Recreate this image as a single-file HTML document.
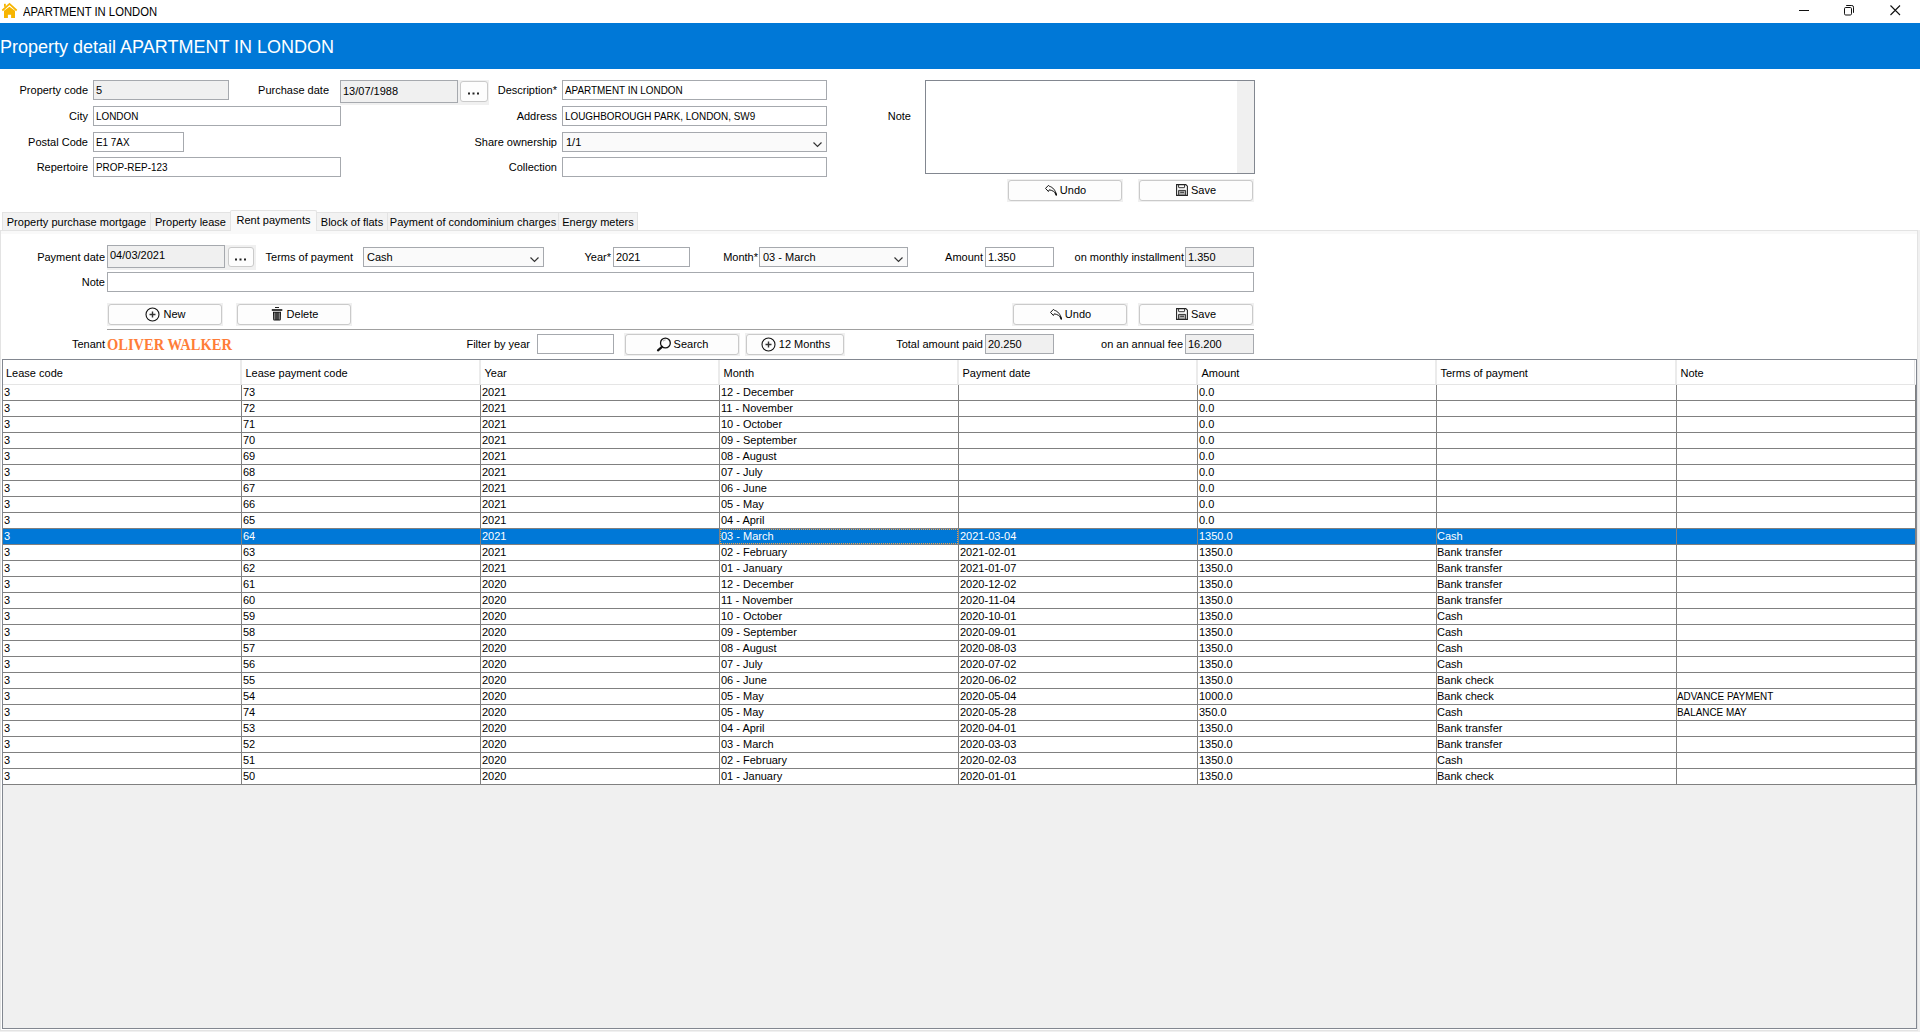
<!DOCTYPE html><html><head><meta charset="utf-8"><title>APARTMENT IN LONDON</title><style>
*{margin:0;padding:0;box-sizing:border-box}
html,body{width:1920px;height:1032px;overflow:hidden;background:#fff;font-family:"Liberation Sans", sans-serif;font-size:11px;color:#000;position:relative}
.lbl{position:absolute;white-space:nowrap}
.fld{position:absolute;border:1px solid #a6a9ae;background:#fff;padding-left:2px;white-space:nowrap;overflow:hidden}
.dis{background:#f0f0f0}
.cmb{background:#fafafa;padding-left:3px}
.chev{position:absolute}
.pnl{position:absolute;background:#f0f0f0}
.btn{position:absolute;border:1px solid #cacaca;border-radius:3px;background:#fdfdfd;text-align:center;white-space:nowrap}
.ico{display:inline-block;vertical-align:middle;position:relative;top:-1px}
.up{display:inline-block;transform:scaleX(0.9);transform-origin:0 50%}
</style></head><body>
<svg style="position:absolute;left:0;top:0" width="20" height="20" viewBox="0 0 20 20"><path d="M2.3 10.5 L9.5 3.9 L16.7 10.5" fill="none" stroke="#f7b500" stroke-width="1.7"/><rect x="4" y="3.8" width="1.8" height="3" fill="#f7b500"/><path d="M4 10.8 L9.5 6.7 L15 10.8 V18 H11.1 V14.7 H7.9 V18 H4 Z" fill="#f7b500"/></svg>
<div class="lbl" style="left:23px;top:4px;font-size:12px;line-height:16px;transform:scaleX(0.94);transform-origin:0 50%">APARTMENT IN LONDON</div>
<div style="position:absolute;left:1799px;top:10px;width:10px;height:1px;background:#111"></div>
<svg style="position:absolute;left:1844px;top:5px" width="11" height="11" viewBox="0 0 11 11"><rect x="0.5" y="2.5" width="7" height="7.5" rx="1.2" fill="none" stroke="#111"/><path d="M2.2 0.5 H7.8 Q9.5 0.5 9.5 2.2 V7.8" fill="none" stroke="#111"/></svg>
<svg style="position:absolute;left:1890px;top:5px" width="11" height="11" viewBox="0 0 11 11"><path d="M0.5 0.5 L10 10 M10 0.5 L0.5 10" stroke="#111" stroke-width="1.1"/></svg>
<div style="position:absolute;left:0;top:23px;width:1920px;height:46px;background:#0078d7"></div>
<div class="lbl" style="left:0px;top:36px;font-size:18px;line-height:22px;color:#fff">Property detail APARTMENT IN LONDON</div>
<div class="lbl" style="right:1832px;top:80px;height:20px;line-height:20px;">Property code</div>
<div class="fld dis" style="left:93px;top:80px;width:136px;height:20px;line-height:18px;">5</div>
<div class="lbl" style="right:1832px;top:106px;height:20px;line-height:20px;">City</div>
<div class="fld" style="left:93px;top:106px;width:248px;height:20px;line-height:18px;"><span class="up">LONDON</span></div>
<div class="lbl" style="right:1832px;top:132px;height:20px;line-height:20px;">Postal Code</div>
<div class="fld" style="left:93px;top:132px;width:91px;height:20px;line-height:18px;"><span class="up">E1 7AX</span></div>
<div class="lbl" style="right:1832px;top:157px;height:20px;line-height:20px;">Repertoire</div>
<div class="fld" style="left:93px;top:157px;width:248px;height:20px;line-height:18px;"><span class="up">PROP-REP-123</span></div>
<div class="lbl" style="right:1591px;top:80px;height:20px;line-height:20px;">Purchase date</div>
<div class="pnl" style="left:340px;top:80px;width:149px;height:25px"></div>
<div class="fld dis" style="left:340px;top:80px;width:118px;height:23px;line-height:21px;line-height:21px">13/07/1988</div>
<div class="btn" style="left:460px;top:81px;width:28px;height:21px;line-height:19px;"><svg width="11" height="3" viewBox="0 0 11 3" style="display:inline-block;vertical-align:middle;position:relative;top:1px;left:-1px"><rect x="0" y="0.5" width="2" height="2" fill="#222"/><rect x="4.5" y="0.5" width="2" height="2" fill="#222"/><rect x="9" y="0.5" width="2" height="2" fill="#222"/></svg></div>
<div class="lbl" style="right:1363px;top:80px;height:20px;line-height:20px;">Description*</div>
<div class="fld" style="left:562px;top:80px;width:265px;height:20px;line-height:18px;"><span class="up">APARTMENT IN LONDON</span></div>
<div class="lbl" style="right:1363px;top:106px;height:20px;line-height:20px;">Address</div>
<div class="fld" style="left:562px;top:106px;width:265px;height:20px;line-height:18px;"><span class="up">LOUGHBOROUGH PARK, LONDON, SW9</span></div>
<div class="lbl" style="right:1363px;top:132px;height:20px;line-height:20px;">Share ownership</div>
<div class="fld cmb" style="left:562px;top:132px;width:265px;height:20px;line-height:18px;">1/1<svg class="chev" style="left:250px;top:9px" width="9" height="6" viewBox="0 0 9 6"><path d="M0.5 0.5 L4.5 4.5 L8.5 0.5" fill="none" stroke="#333" stroke-width="1.15"/></svg></div>
<div class="lbl" style="right:1363px;top:157px;height:20px;line-height:20px;">Collection</div>
<div class="fld" style="left:562px;top:157px;width:265px;height:20px;line-height:18px;"></div>
<div class="lbl" style="right:1009px;top:106px;height:20px;line-height:20px;">Note</div>
<div style="position:absolute;left:925px;top:80px;width:330px;height:94px;border:1px solid #828790;background:#fff"><div style="position:absolute;right:0;top:0;width:17px;height:92px;background:#f0f0f0"></div></div>
<div class="pnl" style="left:1007px;top:179px;width:116px;height:23px"></div>
<div class="btn" style="left:1008px;top:180px;width:114px;height:21px;line-height:19px;"><svg class="ico" width="12" height="11" viewBox="0 0 12 11" style="margin-right:4px;left:1px"><path d="M0.5 3.4 L3.4 0.4 L4.5 1.3 C7.6 2.2 10.5 5 11.5 10.2 C10.5 7 7.6 5.4 4.3 4.8 L3.4 6.5 Z" fill="none" stroke="#111" stroke-width="1" stroke-linejoin="round"/><path d="M10.2 7.6 L11.5 10.4" stroke="#111" stroke-width="1.4"/></svg>Undo</div>
<div class="pnl" style="left:1138px;top:179px;width:116px;height:23px"></div>
<div class="btn" style="left:1139px;top:180px;width:114px;height:21px;line-height:19px;"><svg class="ico" width="12" height="12" viewBox="0 0 12 12" style="margin-right:3px"><rect x="2.6" y="6.4" width="7" height="5" fill="#b0b0b0"/><path d="M0.6 0.6 H9.8 L11.4 2.2 V11.4 H0.6 Z" fill="none" stroke="#222" stroke-width="1.1"/><path d="M2.6 0.6 V3.3 Q2.6 3.7 3 3.7 H8.2 Q8.6 3.7 8.6 3.3 V0.6" fill="none" stroke="#333" stroke-width="1"/><path d="M2.6 6.4 V11.4 M9.6 6.4 V11.4 M4.2 8.3 H8 M2.6 6.4 H9.6" fill="none" stroke="#333" stroke-width="1"/></svg>Save</div>
<div style="position:absolute;left:1918px;top:230px;width:2px;height:802px;background:#f0f0f0"></div>
<div style="position:absolute;left:0px;top:1031px;width:1920px;height:1px;background:#f0f0f0"></div>
<div style="position:absolute;left:0px;top:230px;width:1918px;height:801px;border:1px solid #e3e3e3;background:#fff"></div>
<div style="position:absolute;left:1px;top:231px;width:1916px;height:3px;background:#f9f9f9"></div>
<div class="lbl" style="left:2px;top:212px;width:149px;height:18px;border:1px solid #e3e3e3;border-bottom:none;background:#f2f2f2;text-align:center;line-height:19px">Property purchase mortgage</div>
<div class="lbl" style="left:150px;top:212px;width:81px;height:18px;border:1px solid #e3e3e3;border-bottom:none;background:#f2f2f2;text-align:center;line-height:19px">Property lease</div>
<div class="lbl" style="left:230px;top:210px;width:87px;height:20px;border:1px solid #e3e3e3;border-bottom:none;border-radius:2px 2px 0 0;background:#f9f9f9;text-align:center;line-height:19px">Rent payments</div>
<div style="position:absolute;left:231px;top:230px;width:85px;height:1px;background:#f9f9f9"></div>
<div class="lbl" style="left:316px;top:212px;width:72px;height:18px;border:1px solid #e3e3e3;border-bottom:none;background:#f2f2f2;text-align:center;line-height:19px">Block of flats</div>
<div class="lbl" style="left:387px;top:212px;width:172px;height:18px;border:1px solid #e3e3e3;border-bottom:none;background:#f2f2f2;text-align:center;line-height:19px">Payment of condominium charges</div>
<div class="lbl" style="left:558px;top:212px;width:80px;height:18px;border:1px solid #e3e3e3;border-bottom:none;background:#f2f2f2;text-align:center;line-height:19px">Energy meters</div>
<div class="lbl" style="right:1815px;top:247px;height:20px;line-height:20px;">Payment date</div>
<div class="pnl" style="left:107px;top:245px;width:149px;height:25px"></div>
<div class="fld dis" style="left:107px;top:245px;width:118px;height:23px;line-height:21px;line-height:19px">04/03/2021</div>
<div class="btn" style="left:228px;top:247px;width:26px;height:20px;line-height:18px;"><svg width="11" height="3" viewBox="0 0 11 3" style="display:inline-block;vertical-align:middle;position:relative;top:1px;left:-1px"><rect x="0" y="0.5" width="2" height="2" fill="#222"/><rect x="4.5" y="0.5" width="2" height="2" fill="#222"/><rect x="9" y="0.5" width="2" height="2" fill="#222"/></svg></div>
<div class="lbl" style="right:1567px;top:247px;height:20px;line-height:20px;">Terms of payment</div>
<div class="fld cmb" style="left:363px;top:247px;width:181px;height:20px;line-height:18px;">Cash<svg class="chev" style="left:166px;top:9px" width="9" height="6" viewBox="0 0 9 6"><path d="M0.5 0.5 L4.5 4.5 L8.5 0.5" fill="none" stroke="#333" stroke-width="1.15"/></svg></div>
<div class="lbl" style="right:1309px;top:247px;height:20px;line-height:20px;">Year*</div>
<div class="fld" style="left:613px;top:247px;width:77px;height:20px;line-height:18px;">2021</div>
<div class="lbl" style="right:1162px;top:247px;height:20px;line-height:20px;">Month*</div>
<div class="fld cmb" style="left:759px;top:247px;width:149px;height:20px;line-height:18px;">03 - March<svg class="chev" style="left:134px;top:9px" width="9" height="6" viewBox="0 0 9 6"><path d="M0.5 0.5 L4.5 4.5 L8.5 0.5" fill="none" stroke="#333" stroke-width="1.15"/></svg></div>
<div class="lbl" style="right:937px;top:247px;height:20px;line-height:20px;">Amount</div>
<div class="fld" style="left:985px;top:247px;width:69px;height:20px;line-height:18px;">1.350</div>
<div class="lbl" style="right:736px;top:247px;height:20px;line-height:20px;">on monthly installment</div>
<div class="fld dis" style="left:1185px;top:247px;width:69px;height:20px;line-height:18px;">1.350</div>
<div class="lbl" style="right:1815px;top:272px;height:20px;line-height:20px;">Note</div>
<div class="fld" style="left:107px;top:272px;width:1147px;height:20px;line-height:18px;"></div>
<div class="pnl" style="left:107px;top:303px;width:116px;height:23px"></div>
<div class="btn" style="left:108px;top:304px;width:114px;height:21px;line-height:19px;"><svg class="ico" width="15" height="15" viewBox="0 0 15 15" style="margin-right:4px;left:1px"><circle cx="7.5" cy="7.5" r="6.5" fill="none" stroke="#111" stroke-width="1.1"/><path d="M4.5 7.5 H10.5 M7.5 4.5 V10.5" stroke="#333" stroke-width="1.4"/></svg>New</div>
<div class="pnl" style="left:236px;top:303px;width:116px;height:23px"></div>
<div class="btn" style="left:237px;top:304px;width:114px;height:21px;line-height:19px;"><svg class="ico" width="12" height="14" viewBox="0 0 12 14" style="margin-right:5px;left:1px"><rect x="4" y="0" width="4" height="1" fill="#222"/><rect x="0.8" y="2.2" width="10.5" height="1.6" fill="#111"/><path d="M2 4.8 H10 L9.8 12.6 Q9.7 13.6 8.7 13.6 H3.3 Q2.3 13.6 2.2 12.6 Z" fill="#111"/><rect x="3.4" y="5.6" width="0.9" height="7" fill="#ccc"/><rect x="7.7" y="5.6" width="0.9" height="7" fill="#ccc"/><rect x="5.5" y="5.6" width="1" height="7" fill="#777"/></svg>Delete</div>
<div class="pnl" style="left:1012px;top:303px;width:116px;height:23px"></div>
<div class="btn" style="left:1013px;top:304px;width:114px;height:21px;line-height:19px;"><svg class="ico" width="12" height="11" viewBox="0 0 12 11" style="margin-right:4px;left:1px"><path d="M0.5 3.4 L3.4 0.4 L4.5 1.3 C7.6 2.2 10.5 5 11.5 10.2 C10.5 7 7.6 5.4 4.3 4.8 L3.4 6.5 Z" fill="none" stroke="#111" stroke-width="1" stroke-linejoin="round"/><path d="M10.2 7.6 L11.5 10.4" stroke="#111" stroke-width="1.4"/></svg>Undo</div>
<div class="pnl" style="left:1138px;top:303px;width:116px;height:23px"></div>
<div class="btn" style="left:1139px;top:304px;width:114px;height:21px;line-height:19px;"><svg class="ico" width="12" height="12" viewBox="0 0 12 12" style="margin-right:3px"><rect x="2.6" y="6.4" width="7" height="5" fill="#b0b0b0"/><path d="M0.6 0.6 H9.8 L11.4 2.2 V11.4 H0.6 Z" fill="none" stroke="#222" stroke-width="1.1"/><path d="M2.6 0.6 V3.3 Q2.6 3.7 3 3.7 H8.2 Q8.6 3.7 8.6 3.3 V0.6" fill="none" stroke="#333" stroke-width="1"/><path d="M2.6 6.4 V11.4 M9.6 6.4 V11.4 M4.2 8.3 H8 M2.6 6.4 H9.6" fill="none" stroke="#333" stroke-width="1"/></svg>Save</div>
<div style="position:absolute;left:107px;top:329px;width:1147px;height:1px;background:#a0a0a0"></div>
<div class="lbl" style="right:1815px;top:334px;height:20px;line-height:20px;">Tenant</div>
<div class="lbl" style="left:107px;top:334px;height:22px;line-height:22px;font-family:Liberation Serif,serif;font-size:16px;font-weight:bold;color:#ff7d38"><span style="display:inline-block;transform:scaleX(0.905);transform-origin:0 50%">OLIVER WALKER</span></div>
<div class="lbl" style="right:1390px;top:334px;height:20px;line-height:20px;">Filter by year</div>
<div class="fld" style="left:537px;top:334px;width:77px;height:20px;line-height:18px;"></div>
<div class="pnl" style="left:624px;top:333px;width:116px;height:23px"></div>
<div class="btn" style="left:625px;top:334px;width:114px;height:21px;line-height:19px;"><svg class="ico" width="15" height="15" viewBox="0 0 15 15" style="margin-right:3px"><circle cx="9.4" cy="6.0" r="4.9" fill="none" stroke="#111" stroke-width="1.3"/><path d="M6 9.8 L2 13.3" stroke="#111" stroke-width="2.2" stroke-linecap="round"/><path d="M7 4.2 Q8 3.1 9.6 2.9" fill="none" stroke="#888" stroke-width="0.8"/></svg>Search</div>
<div class="pnl" style="left:745px;top:333px;width:100px;height:23px"></div>
<div class="btn" style="left:746px;top:334px;width:98px;height:21px;line-height:19px;"><svg class="ico" width="15" height="15" viewBox="0 0 15 15" style="margin-right:4px;left:1px"><circle cx="7.5" cy="7.5" r="6.5" fill="none" stroke="#111" stroke-width="1.1"/><path d="M4.5 7.5 H10.5 M7.5 4.5 V10.5" stroke="#333" stroke-width="1.4"/></svg>12 Months</div>
<div class="lbl" style="right:937px;top:334px;height:20px;line-height:20px;">Total amount paid</div>
<div class="fld dis" style="left:985px;top:334px;width:69px;height:20px;line-height:18px;">20.250</div>
<div class="lbl" style="right:737px;top:334px;height:20px;line-height:20px;">on an annual fee</div>
<div class="fld dis" style="left:1185px;top:334px;width:69px;height:20px;line-height:18px;">16.200</div>
<div style="position:absolute;left:2px;top:359px;width:1915px;height:670px;border:1px solid #828790;background:#f0f0f0"></div>
<div style="position:absolute;left:3px;top:360px;width:1913px;height:25px;background:#fff;border-bottom:1px solid #e5e5e5"></div>
<div class="lbl" style="left:6px;top:361px;height:24px;line-height:24px">Lease code</div>
<div class="lbl" style="left:245.5px;top:361px;height:24px;line-height:24px">Lease payment code</div>
<div style="position:absolute;left:240px;top:360px;width:2px;height:24px;background:#ebebeb"></div>
<div class="lbl" style="left:484.5px;top:361px;height:24px;line-height:24px">Year</div>
<div style="position:absolute;left:479px;top:360px;width:2px;height:24px;background:#ebebeb"></div>
<div class="lbl" style="left:723.5px;top:361px;height:24px;line-height:24px">Month</div>
<div style="position:absolute;left:718px;top:360px;width:2px;height:24px;background:#ebebeb"></div>
<div class="lbl" style="left:962.5px;top:361px;height:24px;line-height:24px">Payment date</div>
<div style="position:absolute;left:957px;top:360px;width:2px;height:24px;background:#ebebeb"></div>
<div class="lbl" style="left:1201.5px;top:361px;height:24px;line-height:24px">Amount</div>
<div style="position:absolute;left:1196px;top:360px;width:2px;height:24px;background:#ebebeb"></div>
<div class="lbl" style="left:1440.5px;top:361px;height:24px;line-height:24px">Terms of payment</div>
<div style="position:absolute;left:1435px;top:360px;width:2px;height:24px;background:#ebebeb"></div>
<div class="lbl" style="left:1680.5px;top:361px;height:24px;line-height:24px">Note</div>
<div style="position:absolute;left:1675px;top:360px;width:2px;height:24px;background:#ebebeb"></div>
<div style="position:absolute;left:1914px;top:360px;width:1px;height:24px;background:#e5e5e5"></div>
<div style="position:absolute;left:3px;top:385px;width:1913px;height:400px;background:#fff"></div>
<div class="lbl" style="left:4px;top:385px;height:15px;line-height:15px;color:#000">3</div>
<div class="lbl" style="left:243px;top:385px;height:15px;line-height:15px;color:#000">73</div>
<div class="lbl" style="left:482px;top:385px;height:15px;line-height:15px;color:#000">2021</div>
<div class="lbl" style="left:721px;top:385px;height:15px;line-height:15px;color:#000">12 - December</div>
<div class="lbl" style="left:1199px;top:385px;height:15px;line-height:15px;color:#000">0.0</div>
<div style="position:absolute;left:3px;top:400px;width:1913px;height:1px;background:#808080"></div>
<div class="lbl" style="left:4px;top:401px;height:15px;line-height:15px;color:#000">3</div>
<div class="lbl" style="left:243px;top:401px;height:15px;line-height:15px;color:#000">72</div>
<div class="lbl" style="left:482px;top:401px;height:15px;line-height:15px;color:#000">2021</div>
<div class="lbl" style="left:721px;top:401px;height:15px;line-height:15px;color:#000">11 - November</div>
<div class="lbl" style="left:1199px;top:401px;height:15px;line-height:15px;color:#000">0.0</div>
<div style="position:absolute;left:3px;top:416px;width:1913px;height:1px;background:#808080"></div>
<div class="lbl" style="left:4px;top:417px;height:15px;line-height:15px;color:#000">3</div>
<div class="lbl" style="left:243px;top:417px;height:15px;line-height:15px;color:#000">71</div>
<div class="lbl" style="left:482px;top:417px;height:15px;line-height:15px;color:#000">2021</div>
<div class="lbl" style="left:721px;top:417px;height:15px;line-height:15px;color:#000">10 - October</div>
<div class="lbl" style="left:1199px;top:417px;height:15px;line-height:15px;color:#000">0.0</div>
<div style="position:absolute;left:3px;top:432px;width:1913px;height:1px;background:#808080"></div>
<div class="lbl" style="left:4px;top:433px;height:15px;line-height:15px;color:#000">3</div>
<div class="lbl" style="left:243px;top:433px;height:15px;line-height:15px;color:#000">70</div>
<div class="lbl" style="left:482px;top:433px;height:15px;line-height:15px;color:#000">2021</div>
<div class="lbl" style="left:721px;top:433px;height:15px;line-height:15px;color:#000">09 - September</div>
<div class="lbl" style="left:1199px;top:433px;height:15px;line-height:15px;color:#000">0.0</div>
<div style="position:absolute;left:3px;top:448px;width:1913px;height:1px;background:#808080"></div>
<div class="lbl" style="left:4px;top:449px;height:15px;line-height:15px;color:#000">3</div>
<div class="lbl" style="left:243px;top:449px;height:15px;line-height:15px;color:#000">69</div>
<div class="lbl" style="left:482px;top:449px;height:15px;line-height:15px;color:#000">2021</div>
<div class="lbl" style="left:721px;top:449px;height:15px;line-height:15px;color:#000">08 - August</div>
<div class="lbl" style="left:1199px;top:449px;height:15px;line-height:15px;color:#000">0.0</div>
<div style="position:absolute;left:3px;top:464px;width:1913px;height:1px;background:#808080"></div>
<div class="lbl" style="left:4px;top:465px;height:15px;line-height:15px;color:#000">3</div>
<div class="lbl" style="left:243px;top:465px;height:15px;line-height:15px;color:#000">68</div>
<div class="lbl" style="left:482px;top:465px;height:15px;line-height:15px;color:#000">2021</div>
<div class="lbl" style="left:721px;top:465px;height:15px;line-height:15px;color:#000">07 - July</div>
<div class="lbl" style="left:1199px;top:465px;height:15px;line-height:15px;color:#000">0.0</div>
<div style="position:absolute;left:3px;top:480px;width:1913px;height:1px;background:#808080"></div>
<div class="lbl" style="left:4px;top:481px;height:15px;line-height:15px;color:#000">3</div>
<div class="lbl" style="left:243px;top:481px;height:15px;line-height:15px;color:#000">67</div>
<div class="lbl" style="left:482px;top:481px;height:15px;line-height:15px;color:#000">2021</div>
<div class="lbl" style="left:721px;top:481px;height:15px;line-height:15px;color:#000">06 - June</div>
<div class="lbl" style="left:1199px;top:481px;height:15px;line-height:15px;color:#000">0.0</div>
<div style="position:absolute;left:3px;top:496px;width:1913px;height:1px;background:#808080"></div>
<div class="lbl" style="left:4px;top:497px;height:15px;line-height:15px;color:#000">3</div>
<div class="lbl" style="left:243px;top:497px;height:15px;line-height:15px;color:#000">66</div>
<div class="lbl" style="left:482px;top:497px;height:15px;line-height:15px;color:#000">2021</div>
<div class="lbl" style="left:721px;top:497px;height:15px;line-height:15px;color:#000">05 - May</div>
<div class="lbl" style="left:1199px;top:497px;height:15px;line-height:15px;color:#000">0.0</div>
<div style="position:absolute;left:3px;top:512px;width:1913px;height:1px;background:#808080"></div>
<div class="lbl" style="left:4px;top:513px;height:15px;line-height:15px;color:#000">3</div>
<div class="lbl" style="left:243px;top:513px;height:15px;line-height:15px;color:#000">65</div>
<div class="lbl" style="left:482px;top:513px;height:15px;line-height:15px;color:#000">2021</div>
<div class="lbl" style="left:721px;top:513px;height:15px;line-height:15px;color:#000">04 - April</div>
<div class="lbl" style="left:1199px;top:513px;height:15px;line-height:15px;color:#000">0.0</div>
<div style="position:absolute;left:3px;top:528px;width:1913px;height:1px;background:#808080"></div>
<div style="position:absolute;left:3px;top:529px;width:1913px;height:15px;background:#0078d7"></div>
<div class="lbl" style="left:4px;top:529px;height:15px;line-height:15px;color:#fff">3</div>
<div class="lbl" style="left:243px;top:529px;height:15px;line-height:15px;color:#fff">64</div>
<div class="lbl" style="left:482px;top:529px;height:15px;line-height:15px;color:#fff">2021</div>
<div class="lbl" style="left:721px;top:529px;height:15px;line-height:15px;color:#fff">03 - March</div>
<div class="lbl" style="left:960px;top:529px;height:15px;line-height:15px;color:#fff">2021-03-04</div>
<div class="lbl" style="left:1199px;top:529px;height:15px;line-height:15px;color:#fff">1350.0</div>
<div class="lbl" style="left:1437px;top:529px;height:15px;line-height:15px;color:#fff">Cash</div>
<div style="position:absolute;left:720px;top:529px;width:238px;height:15px;border:1px dotted #e8a050"></div>
<div style="position:absolute;left:3px;top:544px;width:1913px;height:1px;background:#808080"></div>
<div class="lbl" style="left:4px;top:545px;height:15px;line-height:15px;color:#000">3</div>
<div class="lbl" style="left:243px;top:545px;height:15px;line-height:15px;color:#000">63</div>
<div class="lbl" style="left:482px;top:545px;height:15px;line-height:15px;color:#000">2021</div>
<div class="lbl" style="left:721px;top:545px;height:15px;line-height:15px;color:#000">02 - February</div>
<div class="lbl" style="left:960px;top:545px;height:15px;line-height:15px;color:#000">2021-02-01</div>
<div class="lbl" style="left:1199px;top:545px;height:15px;line-height:15px;color:#000">1350.0</div>
<div class="lbl" style="left:1437px;top:545px;height:15px;line-height:15px;color:#000">Bank transfer</div>
<div style="position:absolute;left:3px;top:560px;width:1913px;height:1px;background:#808080"></div>
<div class="lbl" style="left:4px;top:561px;height:15px;line-height:15px;color:#000">3</div>
<div class="lbl" style="left:243px;top:561px;height:15px;line-height:15px;color:#000">62</div>
<div class="lbl" style="left:482px;top:561px;height:15px;line-height:15px;color:#000">2021</div>
<div class="lbl" style="left:721px;top:561px;height:15px;line-height:15px;color:#000">01 - January</div>
<div class="lbl" style="left:960px;top:561px;height:15px;line-height:15px;color:#000">2021-01-07</div>
<div class="lbl" style="left:1199px;top:561px;height:15px;line-height:15px;color:#000">1350.0</div>
<div class="lbl" style="left:1437px;top:561px;height:15px;line-height:15px;color:#000">Bank transfer</div>
<div style="position:absolute;left:3px;top:576px;width:1913px;height:1px;background:#808080"></div>
<div class="lbl" style="left:4px;top:577px;height:15px;line-height:15px;color:#000">3</div>
<div class="lbl" style="left:243px;top:577px;height:15px;line-height:15px;color:#000">61</div>
<div class="lbl" style="left:482px;top:577px;height:15px;line-height:15px;color:#000">2020</div>
<div class="lbl" style="left:721px;top:577px;height:15px;line-height:15px;color:#000">12 - December</div>
<div class="lbl" style="left:960px;top:577px;height:15px;line-height:15px;color:#000">2020-12-02</div>
<div class="lbl" style="left:1199px;top:577px;height:15px;line-height:15px;color:#000">1350.0</div>
<div class="lbl" style="left:1437px;top:577px;height:15px;line-height:15px;color:#000">Bank transfer</div>
<div style="position:absolute;left:3px;top:592px;width:1913px;height:1px;background:#808080"></div>
<div class="lbl" style="left:4px;top:593px;height:15px;line-height:15px;color:#000">3</div>
<div class="lbl" style="left:243px;top:593px;height:15px;line-height:15px;color:#000">60</div>
<div class="lbl" style="left:482px;top:593px;height:15px;line-height:15px;color:#000">2020</div>
<div class="lbl" style="left:721px;top:593px;height:15px;line-height:15px;color:#000">11 - November</div>
<div class="lbl" style="left:960px;top:593px;height:15px;line-height:15px;color:#000">2020-11-04</div>
<div class="lbl" style="left:1199px;top:593px;height:15px;line-height:15px;color:#000">1350.0</div>
<div class="lbl" style="left:1437px;top:593px;height:15px;line-height:15px;color:#000">Bank transfer</div>
<div style="position:absolute;left:3px;top:608px;width:1913px;height:1px;background:#808080"></div>
<div class="lbl" style="left:4px;top:609px;height:15px;line-height:15px;color:#000">3</div>
<div class="lbl" style="left:243px;top:609px;height:15px;line-height:15px;color:#000">59</div>
<div class="lbl" style="left:482px;top:609px;height:15px;line-height:15px;color:#000">2020</div>
<div class="lbl" style="left:721px;top:609px;height:15px;line-height:15px;color:#000">10 - October</div>
<div class="lbl" style="left:960px;top:609px;height:15px;line-height:15px;color:#000">2020-10-01</div>
<div class="lbl" style="left:1199px;top:609px;height:15px;line-height:15px;color:#000">1350.0</div>
<div class="lbl" style="left:1437px;top:609px;height:15px;line-height:15px;color:#000">Cash</div>
<div style="position:absolute;left:3px;top:624px;width:1913px;height:1px;background:#808080"></div>
<div class="lbl" style="left:4px;top:625px;height:15px;line-height:15px;color:#000">3</div>
<div class="lbl" style="left:243px;top:625px;height:15px;line-height:15px;color:#000">58</div>
<div class="lbl" style="left:482px;top:625px;height:15px;line-height:15px;color:#000">2020</div>
<div class="lbl" style="left:721px;top:625px;height:15px;line-height:15px;color:#000">09 - September</div>
<div class="lbl" style="left:960px;top:625px;height:15px;line-height:15px;color:#000">2020-09-01</div>
<div class="lbl" style="left:1199px;top:625px;height:15px;line-height:15px;color:#000">1350.0</div>
<div class="lbl" style="left:1437px;top:625px;height:15px;line-height:15px;color:#000">Cash</div>
<div style="position:absolute;left:3px;top:640px;width:1913px;height:1px;background:#808080"></div>
<div class="lbl" style="left:4px;top:641px;height:15px;line-height:15px;color:#000">3</div>
<div class="lbl" style="left:243px;top:641px;height:15px;line-height:15px;color:#000">57</div>
<div class="lbl" style="left:482px;top:641px;height:15px;line-height:15px;color:#000">2020</div>
<div class="lbl" style="left:721px;top:641px;height:15px;line-height:15px;color:#000">08 - August</div>
<div class="lbl" style="left:960px;top:641px;height:15px;line-height:15px;color:#000">2020-08-03</div>
<div class="lbl" style="left:1199px;top:641px;height:15px;line-height:15px;color:#000">1350.0</div>
<div class="lbl" style="left:1437px;top:641px;height:15px;line-height:15px;color:#000">Cash</div>
<div style="position:absolute;left:3px;top:656px;width:1913px;height:1px;background:#808080"></div>
<div class="lbl" style="left:4px;top:657px;height:15px;line-height:15px;color:#000">3</div>
<div class="lbl" style="left:243px;top:657px;height:15px;line-height:15px;color:#000">56</div>
<div class="lbl" style="left:482px;top:657px;height:15px;line-height:15px;color:#000">2020</div>
<div class="lbl" style="left:721px;top:657px;height:15px;line-height:15px;color:#000">07 - July</div>
<div class="lbl" style="left:960px;top:657px;height:15px;line-height:15px;color:#000">2020-07-02</div>
<div class="lbl" style="left:1199px;top:657px;height:15px;line-height:15px;color:#000">1350.0</div>
<div class="lbl" style="left:1437px;top:657px;height:15px;line-height:15px;color:#000">Cash</div>
<div style="position:absolute;left:3px;top:672px;width:1913px;height:1px;background:#808080"></div>
<div class="lbl" style="left:4px;top:673px;height:15px;line-height:15px;color:#000">3</div>
<div class="lbl" style="left:243px;top:673px;height:15px;line-height:15px;color:#000">55</div>
<div class="lbl" style="left:482px;top:673px;height:15px;line-height:15px;color:#000">2020</div>
<div class="lbl" style="left:721px;top:673px;height:15px;line-height:15px;color:#000">06 - June</div>
<div class="lbl" style="left:960px;top:673px;height:15px;line-height:15px;color:#000">2020-06-02</div>
<div class="lbl" style="left:1199px;top:673px;height:15px;line-height:15px;color:#000">1350.0</div>
<div class="lbl" style="left:1437px;top:673px;height:15px;line-height:15px;color:#000">Bank check</div>
<div style="position:absolute;left:3px;top:688px;width:1913px;height:1px;background:#808080"></div>
<div class="lbl" style="left:4px;top:689px;height:15px;line-height:15px;color:#000">3</div>
<div class="lbl" style="left:243px;top:689px;height:15px;line-height:15px;color:#000">54</div>
<div class="lbl" style="left:482px;top:689px;height:15px;line-height:15px;color:#000">2020</div>
<div class="lbl" style="left:721px;top:689px;height:15px;line-height:15px;color:#000">05 - May</div>
<div class="lbl" style="left:960px;top:689px;height:15px;line-height:15px;color:#000">2020-05-04</div>
<div class="lbl" style="left:1199px;top:689px;height:15px;line-height:15px;color:#000">1000.0</div>
<div class="lbl" style="left:1437px;top:689px;height:15px;line-height:15px;color:#000">Bank check</div>
<div class="lbl" style="left:1677px;top:689px;height:15px;line-height:15px;color:#000"><span class="up">ADVANCE PAYMENT</span></div>
<div style="position:absolute;left:3px;top:704px;width:1913px;height:1px;background:#808080"></div>
<div class="lbl" style="left:4px;top:705px;height:15px;line-height:15px;color:#000">3</div>
<div class="lbl" style="left:243px;top:705px;height:15px;line-height:15px;color:#000">74</div>
<div class="lbl" style="left:482px;top:705px;height:15px;line-height:15px;color:#000">2020</div>
<div class="lbl" style="left:721px;top:705px;height:15px;line-height:15px;color:#000">05 - May</div>
<div class="lbl" style="left:960px;top:705px;height:15px;line-height:15px;color:#000">2020-05-28</div>
<div class="lbl" style="left:1199px;top:705px;height:15px;line-height:15px;color:#000">350.0</div>
<div class="lbl" style="left:1437px;top:705px;height:15px;line-height:15px;color:#000">Cash</div>
<div class="lbl" style="left:1677px;top:705px;height:15px;line-height:15px;color:#000"><span class="up">BALANCE MAY</span></div>
<div style="position:absolute;left:3px;top:720px;width:1913px;height:1px;background:#808080"></div>
<div class="lbl" style="left:4px;top:721px;height:15px;line-height:15px;color:#000">3</div>
<div class="lbl" style="left:243px;top:721px;height:15px;line-height:15px;color:#000">53</div>
<div class="lbl" style="left:482px;top:721px;height:15px;line-height:15px;color:#000">2020</div>
<div class="lbl" style="left:721px;top:721px;height:15px;line-height:15px;color:#000">04 - April</div>
<div class="lbl" style="left:960px;top:721px;height:15px;line-height:15px;color:#000">2020-04-01</div>
<div class="lbl" style="left:1199px;top:721px;height:15px;line-height:15px;color:#000">1350.0</div>
<div class="lbl" style="left:1437px;top:721px;height:15px;line-height:15px;color:#000">Bank transfer</div>
<div style="position:absolute;left:3px;top:736px;width:1913px;height:1px;background:#808080"></div>
<div class="lbl" style="left:4px;top:737px;height:15px;line-height:15px;color:#000">3</div>
<div class="lbl" style="left:243px;top:737px;height:15px;line-height:15px;color:#000">52</div>
<div class="lbl" style="left:482px;top:737px;height:15px;line-height:15px;color:#000">2020</div>
<div class="lbl" style="left:721px;top:737px;height:15px;line-height:15px;color:#000">03 - March</div>
<div class="lbl" style="left:960px;top:737px;height:15px;line-height:15px;color:#000">2020-03-03</div>
<div class="lbl" style="left:1199px;top:737px;height:15px;line-height:15px;color:#000">1350.0</div>
<div class="lbl" style="left:1437px;top:737px;height:15px;line-height:15px;color:#000">Bank transfer</div>
<div style="position:absolute;left:3px;top:752px;width:1913px;height:1px;background:#808080"></div>
<div class="lbl" style="left:4px;top:753px;height:15px;line-height:15px;color:#000">3</div>
<div class="lbl" style="left:243px;top:753px;height:15px;line-height:15px;color:#000">51</div>
<div class="lbl" style="left:482px;top:753px;height:15px;line-height:15px;color:#000">2020</div>
<div class="lbl" style="left:721px;top:753px;height:15px;line-height:15px;color:#000">02 - February</div>
<div class="lbl" style="left:960px;top:753px;height:15px;line-height:15px;color:#000">2020-02-03</div>
<div class="lbl" style="left:1199px;top:753px;height:15px;line-height:15px;color:#000">1350.0</div>
<div class="lbl" style="left:1437px;top:753px;height:15px;line-height:15px;color:#000">Cash</div>
<div style="position:absolute;left:3px;top:768px;width:1913px;height:1px;background:#808080"></div>
<div class="lbl" style="left:4px;top:769px;height:15px;line-height:15px;color:#000">3</div>
<div class="lbl" style="left:243px;top:769px;height:15px;line-height:15px;color:#000">50</div>
<div class="lbl" style="left:482px;top:769px;height:15px;line-height:15px;color:#000">2020</div>
<div class="lbl" style="left:721px;top:769px;height:15px;line-height:15px;color:#000">01 - January</div>
<div class="lbl" style="left:960px;top:769px;height:15px;line-height:15px;color:#000">2020-01-01</div>
<div class="lbl" style="left:1199px;top:769px;height:15px;line-height:15px;color:#000">1350.0</div>
<div class="lbl" style="left:1437px;top:769px;height:15px;line-height:15px;color:#000">Bank check</div>
<div style="position:absolute;left:3px;top:784px;width:1913px;height:1px;background:#808080"></div>
<div style="position:absolute;left:241px;top:385px;width:1px;height:400px;background:#808080"></div>
<div style="position:absolute;left:480px;top:385px;width:1px;height:400px;background:#808080"></div>
<div style="position:absolute;left:719px;top:385px;width:1px;height:400px;background:#808080"></div>
<div style="position:absolute;left:958px;top:385px;width:1px;height:400px;background:#808080"></div>
<div style="position:absolute;left:1197px;top:385px;width:1px;height:400px;background:#808080"></div>
<div style="position:absolute;left:1436px;top:385px;width:1px;height:400px;background:#808080"></div>
<div style="position:absolute;left:1676px;top:385px;width:1px;height:400px;background:#808080"></div>
<div style="position:absolute;left:1915px;top:385px;width:1px;height:400px;background:#808080"></div>
</body></html>
